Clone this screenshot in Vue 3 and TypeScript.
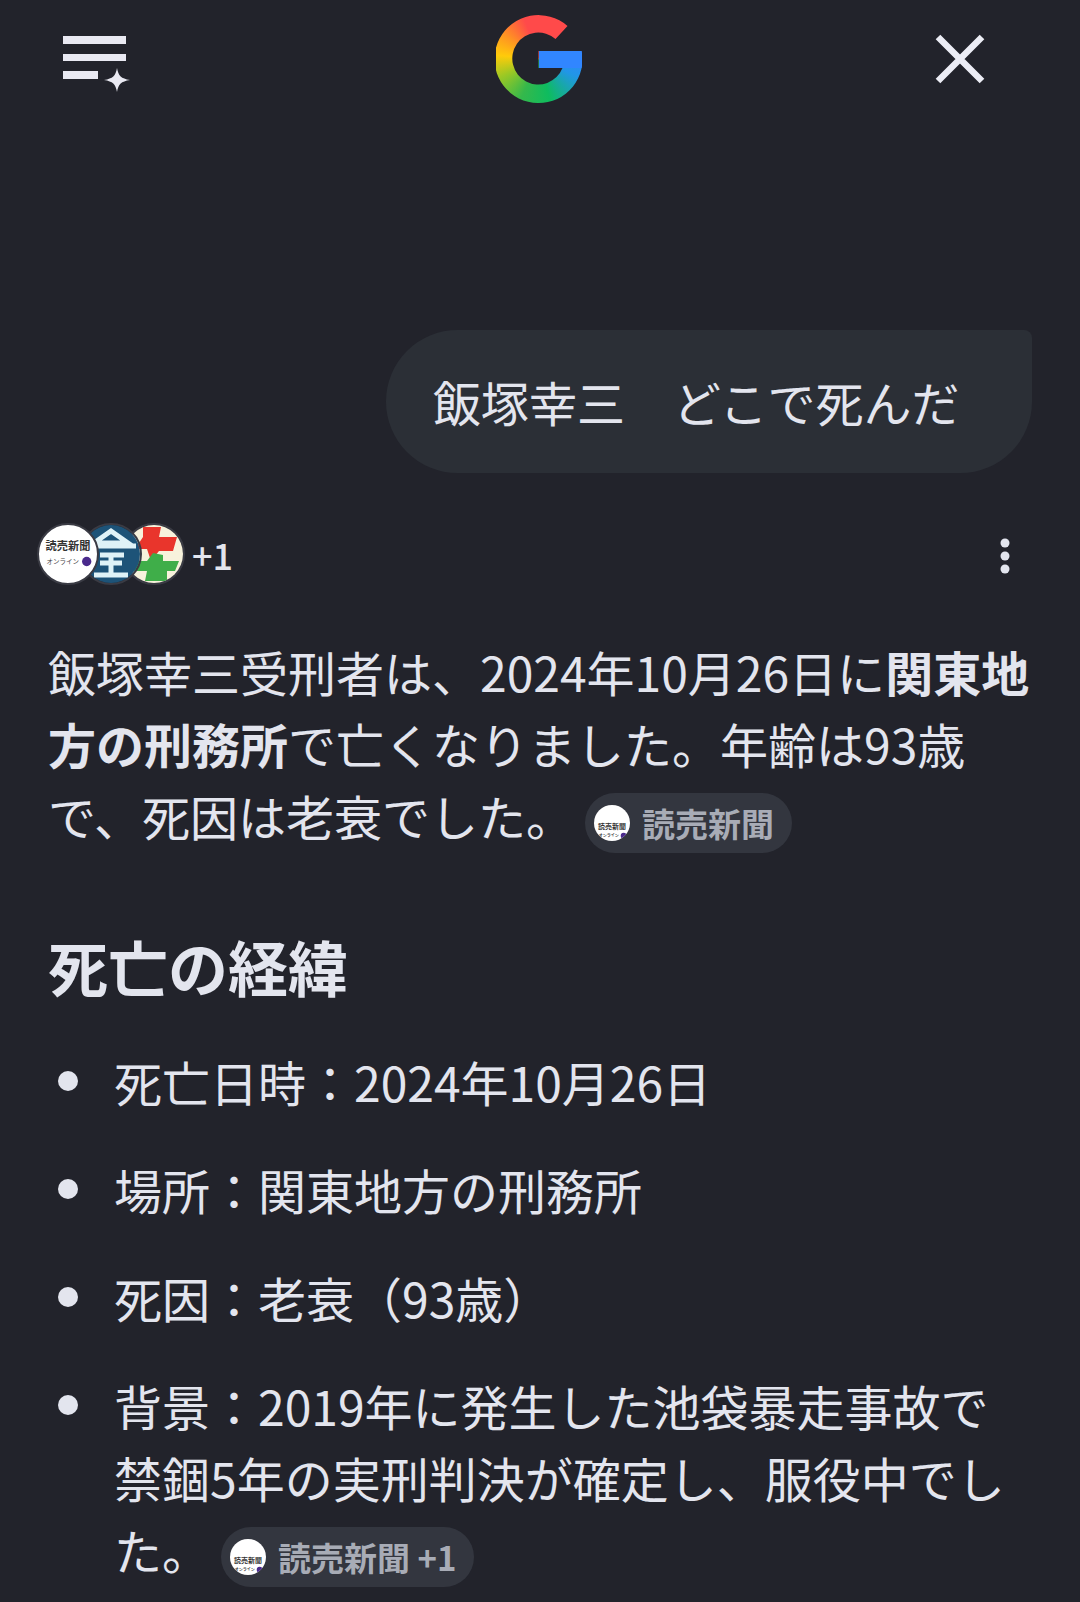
<template>
  <div class="page">
    <header class="top">
      <svg class="menu" width="72" height="62" viewBox="0 0 72 62">
        <rect x="1" y="0" width="63" height="8" />
        <rect x="1" y="18" width="63" height="7" />
        <rect x="1" y="35" width="35" height="8" />
        <path d="M55 32 C56.5 40 59 42.5 68 44 C59 45.5 56.5 48 55 56 C53.5 48 51 45.5 42 44 C51 42.5 53.5 40 55 32 Z" />
      </svg>
      <div class="g-logo"></div>
      <svg class="close" width="50" height="50" viewBox="0 0 50 50">
        <path d="M3 3 L47 47 M47 3 L3 47" />
      </svg>
    </header>

    <div class="bubble">飯塚幸三　どこで死んだ</div>

    <div class="sources">
      <div class="avatars">
        <span class="avatar yomiuri">
          <svg viewBox="0 0 62 62" width="58" height="58">
            <text x="31" y="27" class="y-name">読売新聞</text>
            <text x="8" y="42" class="y-sub">オンライン</text>
            <circle cx="51" cy="39" r="5" fill="#4a2a8c" />
          </svg>
        </span>
        <span class="avatar kin">
          <svg viewBox="0 0 58 58" width="58" height="58">
            <rect width="58" height="58" fill="#1d5378" />
            <path d="M29 6 L12 18 H46 Z M6 21 H54 M18 30 H42 M29 30 V50 M12 50 H46 M18 38 H40" fill="none" stroke="#dff2f7" stroke-width="5" />
          </svg>
        </span>
        <span class="avatar cross">
          <svg viewBox="0 0 58 58" width="58" height="58">
            <rect width="58" height="58" fill="#f7f2dc" />
            <path d="M18 2 H36 L34 12 H52 L48 26 L34 26 L26 36 L22 24 H10 L18 12 Z" fill="#e9352c" />
            <path d="M28 28 L38 30 V36 H54 L50 46 H42 L42 56 H20 L22 46 H6 V36 H22 Z" fill="#3fae49" />
          </svg>
        </span>
      </div>
      <span class="more">+1</span>
      <svg class="dots" width="10" height="36" viewBox="0 0 10 36">
        <circle cx="5" cy="5" r="4.5" />
        <circle cx="5" cy="18" r="4.5" />
        <circle cx="5" cy="31" r="4.5" />
      </svg>
    </div>

    <p class="answer">
      飯塚幸三受刑者は、2024年10月26日に<strong>関東地方の刑務所</strong>で亡くなりました。年齢は93歳で、死因は老衰でした。<span class="chip"><span class="chip-icon"><svg viewBox="0 0 62 62" width="36" height="36"><text x="31" y="27" class="y-name">読売新聞</text><text x="8" y="42" class="y-sub">オンライン</text><circle cx="51" cy="39" r="5" fill="#4a2a8c" /></svg></span>読売新聞</span>
    </p>

    <h2 class="heading">死亡の経緯</h2>

    <ul class="facts">
      <li v-for="fact in facts" :key="fact">{{ fact }}</li>
      <li>背景：2019年に発生した池袋暴走事故で禁錮5年の実刑判決が確定し、服役中でした。<span class="chip"><span class="chip-icon"><svg viewBox="0 0 62 62" width="36" height="36"><text x="31" y="27" class="y-name">読売新聞</text><text x="8" y="42" class="y-sub">オンライン</text><circle cx="51" cy="39" r="5" fill="#4a2a8c" /></svg></span>読売新聞 +1</span></li>
    </ul>
  </div>
</template>

<script setup lang="ts">
const facts: string[] = [
  '死亡日時：2024年10月26日',
  '場所：関東地方の刑務所',
  '死因：老衰（93歳）'
]
</script>

<style>
html,
body {
  margin: 0;
  background: #22232b;
}
</style>

<style scoped>
.page {
  width: 1080px;
  height: 1602px;
  overflow: hidden;
  box-sizing: border-box;
  background: #22232b;
  color: #e3e5ee;
  font-family: "Noto Sans CJK JP", "Noto Sans", sans-serif;
  font-size: 48px;
  line-height: 72px;
}

.top {
  display: flex;
  justify-content: space-between;
  align-items: flex-start;
  height: 330px;
  padding: 15px 95px 0 62px;
  box-sizing: border-box;
}

.menu {
  margin-top: 21px;
  fill: #e9e9f2;
}

.g-logo {
  width: 86px;
  height: 88px;
  margin-left: 8px;
  background:
    linear-gradient(#3186ff, #3186ff) 43px 36px / 43px 17px no-repeat,
    conic-gradient(from 0deg at 43px 44px, #ff4a4a 0deg, #ff4a4a 45deg, #3186ff 85deg, #2196e6 115deg, #0ebc5f 165deg, #35b84b 205deg, #9cc824 245deg, #ffcb0a 275deg, #ff9422 305deg, #ff4a4a 340deg);
  clip-path: path("M72 11 A44 44 0 1 0 87 44 Q87 40 86 36 L43 36 L43 53 L67 53 A26 26 0 1 1 60 24 Z");
}

.close {
  margin-top: 19px;
}

.close path {
  stroke: #ecedf5;
  stroke-width: 6.5;
  fill: none;
}

.bubble {
  margin: 0 48px 0 auto;
  width: 646px;
  height: 143px;
  box-sizing: border-box;
  padding: 35px 47px;
  background: #2b2f36;
  border-radius: 72px 8px 72px 72px;
  white-space: pre;
}

.sources {
  display: flex;
  align-items: center;
  height: 62px;
  margin-top: 50px;
  padding: 0 70px 0 37px;
}

.avatars {
  display: flex;
}

.avatar {
  width: 58px;
  height: 58px;
  border: 2px solid #3a3b44;
  border-radius: 50%;
  overflow: hidden;
  display: block;
  position: relative;
}

.avatar + .avatar {
  margin-left: -19px;
}

.yomiuri {
  background: #fff;
  z-index: 3;
}

.kin {
  z-index: 2;
}

.cross {
  z-index: 1;
}

.y-name {
  font-size: 12px;
  font-weight: 700;
  text-anchor: middle;
  fill: #333;
}

.y-sub {
  font-size: 7px;
  fill: #444;
}

.more {
  margin-left: 7px;
  font-size: 36px;
  font-weight: 500;
  line-height: 40px;
}

.dots {
  margin-left: auto;
  margin-top: 4px;
  fill: #e3e5ee;
}

.answer {
  margin: 50px 48px 0 48px;
  font-weight: 400;
}

.answer strong {
  font-weight: 700;
}

.chip {
  display: inline-flex;
  align-items: center;
  height: 60px;
  padding: 0 18px 0 9px;
  margin-left: 11px;
  border-radius: 30px;
  background: #33363f;
  color: #a8acb6;
  font-size: 33px;
  font-weight: 700;
  line-height: 60px;
  vertical-align: -5px;
  white-space: nowrap;
}

.chip-icon {
  width: 36px;
  height: 36px;
  margin-right: 12px;
  border-radius: 50%;
  background: #fff;
  overflow: hidden;
  display: block;
}

.heading {
  margin: 73px 48px 0;
  font-size: 60px;
  line-height: 80px;
  font-weight: 700;
}

.facts {
  margin: 39px 48px 0 0;
  padding: 0 0 0 114px;
  list-style: none;
}

.facts li {
  position: relative;
  margin-bottom: 36px;
}

.facts li::before {
  content: "";
  position: absolute;
  left: -56px;
  top: 26px;
  width: 20px;
  height: 20px;
  border-radius: 50%;
  background: #e3e5ee;
}
</style>
